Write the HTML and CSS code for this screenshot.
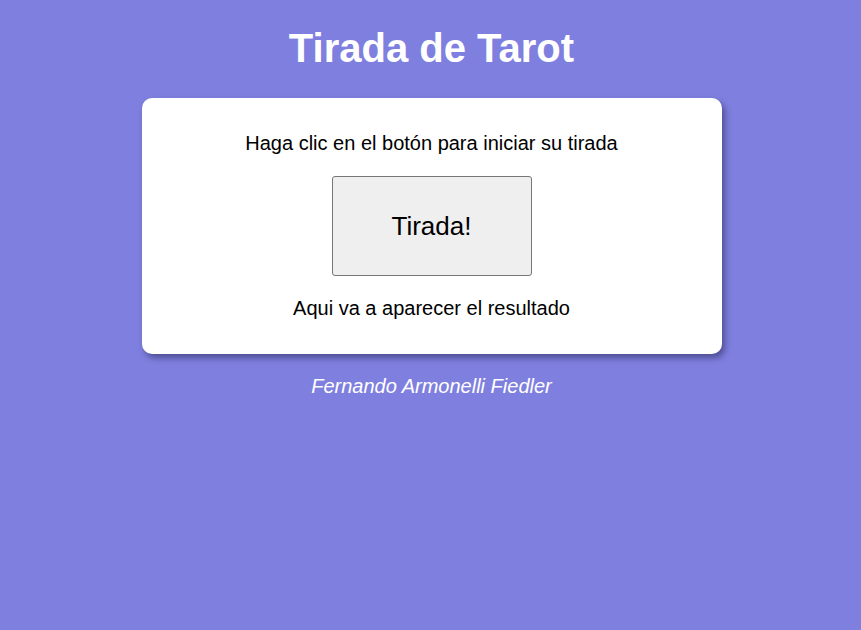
FILE: index.html
```html
<!DOCTYPE html>
<html lang="es">
<head>
<meta charset="utf-8">
<title>Tirada de Tarot</title>
<link rel="stylesheet" href="styles.css">
</head>
<body>
<h1 class="title">Tirada de Tarot</h1>
<main class="card">
  <p class="prompt">Haga clic en el botón para iniciar su tirada</p>
  <button class="draw-btn" type="button">Tirada!</button>
  <p class="result">Aqui va a aparecer el resultado</p>
</main>
<footer class="author">Fernando Armonelli Fiedler</footer>
</body>
</html>
```
FILE: styles.css
```css
html, body {
  margin: 0;
  padding: 0;
}
body {
  background: #7f7fdf;
  font-family: "Liberation Sans", Arial, sans-serif;
  min-height: 630px;
  padding-left: 2px;
  box-sizing: border-box;
  display: flex;
  flex-direction: column;
  align-items: center;
}
.title {
  margin: 25px 0 27px;
  font-size: 40px;
  font-weight: bold;
  color: #ffffff;
  line-height: 46px;
}
.card {
  box-sizing: border-box;
  width: 580px;
  background: #ffffff;
  border-radius: 10px;
  box-shadow: 3px 4px 6px rgba(40, 40, 90, 0.55);
  padding: 34px 20px 34px;
  display: flex;
  flex-direction: column;
  align-items: center;
  gap: 21px;
}
.prompt, .result {
  margin: 0;
  font-size: 20px;
  line-height: 23px;
  color: #000000;
}
.draw-btn {
  width: 200px;
  height: 100px;
  background: #efefef;
  border: 1px solid #767676;
  border-radius: 3px;
  font-family: "Liberation Sans", Arial, sans-serif;
  font-size: 26px;
  color: #000000;
}
.author {
  margin-top: 21px;
  font-size: 20px;
  line-height: 23px;
  font-style: italic;
  color: #ffffff;
}
```
